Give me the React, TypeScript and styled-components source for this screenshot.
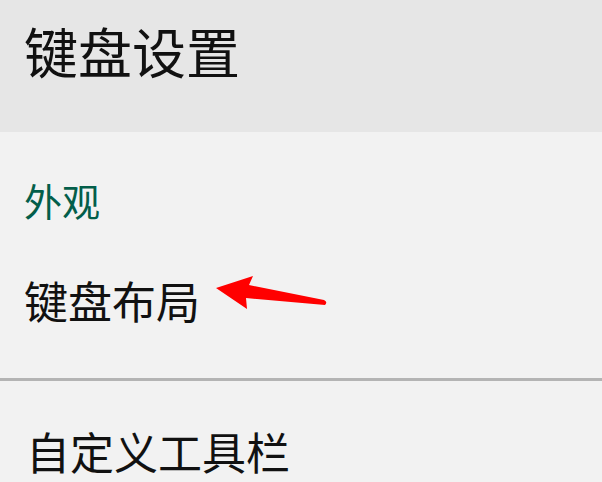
import { FunctionComponent } from "react";
import styled, { createGlobalStyle } from "styled-components";

const GlobalStyle = createGlobalStyle`
  html, body {
    margin: 0;
    padding: 0;
    background: #f2f2f2;
  }
  body {
    font-family: "Noto Sans CJK SC", "Noto Sans", sans-serif;
  }
`;

const Page = styled.div`
  position: relative;
  width: 602px;
  height: 482px;
  overflow: hidden;
  background: #f2f2f2;
`;

const TopBar = styled.div`
  height: 132px;
  box-sizing: border-box;
  padding: 24px 0 0 24px;
  background: #e6e6e6;

  h1 {
    margin: 0;
    font-size: 54px;
    font-weight: 400;
    line-height: 1;
    color: #111;
  }
`;

const Category = styled.div`
  padding: 49px 0 0 24px;
  font-size: 38px;
  line-height: 1;
  color: #035e4a;
`;

const Row = styled.div<{ $top: number; $bottom: number; $indent?: number }>`
  padding: ${(p) => p.$top}px 0 ${(p) => p.$bottom}px ${(p) => p.$indent ?? 24}px;
  font-size: 44px;
  line-height: 1;
  color: #111;
`;

const Divider = styled.div`
  height: 3px;
  background: #b4b4b4;
`;

const Arrow = styled.svg`
  position: absolute;
  left: 0;
  top: 0;
  pointer-events: none;
`;

const App: FunctionComponent = () => {
  return (
    <Page>
      <GlobalStyle />
      <TopBar>
        <h1>键盘设置</h1>
      </TopBar>
      <Category>外观</Category>
      <Row $top={59} $bottom={56}>键盘布局</Row>
      <Divider />
      <Row $top={48} $bottom={0} $indent={26}>自定义工具栏</Row>
      <Arrow width="602" height="482" viewBox="0 0 602 482">
        <path
          d="M216 288 L253 276 L249 285 L324 300 Q328 302 325 305 L246 298 L247 309 Z"
          fill="#ff0000"
        />
      </Arrow>
    </Page>
  );
};

export default App;
